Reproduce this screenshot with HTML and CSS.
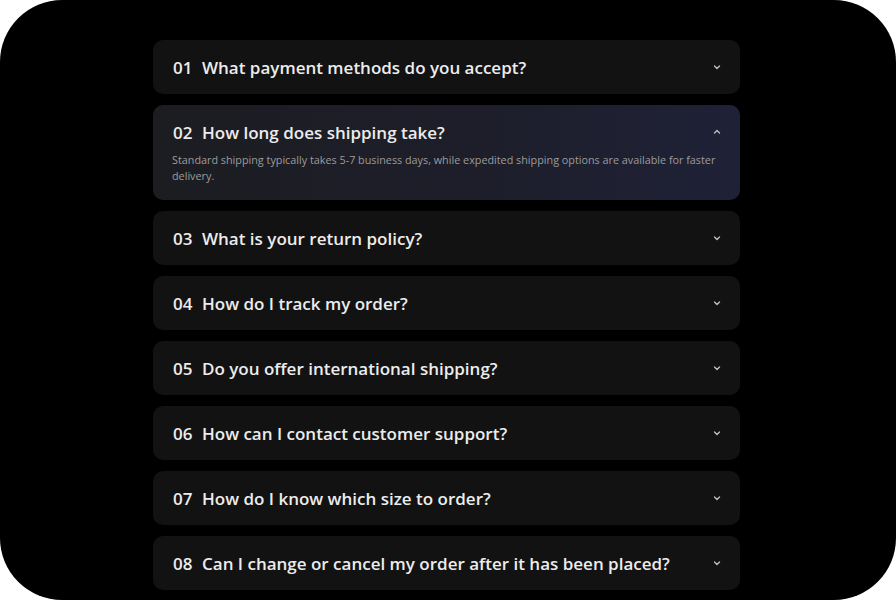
FILE: index.html
```html
<!DOCTYPE html>
<html>
<head>
<meta charset="utf-8">
<link rel="stylesheet" href="styles.css">
</head>
<body>
<div class="frame">
  <div class="faq">
    <div class="item">
      <div class="q"><span class="num">01</span><span class="text">What payment methods do you accept?</span><svg class="chev" viewBox="0 0 10 10"><polyline points="2.5,4 5,6.5 7.5,4"/></svg></div>
    </div>
    <div class="item open">
      <div class="q"><span class="num">02</span><span class="text">How long does shipping take?</span><svg class="chev" viewBox="0 0 10 10"><polyline points="2.5,6 5,3.5 7.5,6"/></svg></div>
      <p class="a">Standard shipping typically takes 5-7 business days, while expedited shipping options are available for faster delivery.</p>
    </div>
    <div class="item">
      <div class="q"><span class="num">03</span><span class="text">What is your return policy?</span><svg class="chev" viewBox="0 0 10 10"><polyline points="2.5,4 5,6.5 7.5,4"/></svg></div>
    </div>
    <div class="item">
      <div class="q"><span class="num">04</span><span class="text">How do I track my order?</span><svg class="chev" viewBox="0 0 10 10"><polyline points="2.5,4 5,6.5 7.5,4"/></svg></div>
    </div>
    <div class="item">
      <div class="q"><span class="num">05</span><span class="text">Do you offer international shipping?</span><svg class="chev" viewBox="0 0 10 10"><polyline points="2.5,4 5,6.5 7.5,4"/></svg></div>
    </div>
    <div class="item">
      <div class="q"><span class="num">06</span><span class="text">How can I contact customer support?</span><svg class="chev" viewBox="0 0 10 10"><polyline points="2.5,4 5,6.5 7.5,4"/></svg></div>
    </div>
    <div class="item">
      <div class="q"><span class="num">07</span><span class="text">How do I know which size to order?</span><svg class="chev" viewBox="0 0 10 10"><polyline points="2.5,4 5,6.5 7.5,4"/></svg></div>
    </div>
    <div class="item">
      <div class="q"><span class="num">08</span><span class="text">Can I change or cancel my order after it has been placed?</span><svg class="chev" viewBox="0 0 10 10"><polyline points="2.5,4 5,6.5 7.5,4"/></svg></div>
    </div>
  </div>
</div>
</body>
</html>
```
FILE: styles.css
```css
html, body {
  margin: 0;
  padding: 0;
  background: #ffffff;
}
body {
  font-family: "Open Sans", "Noto Sans", sans-serif;
  overflow: hidden;
}
.frame {
  width: 896px;
  height: 600px;
  background: #000000;
  border-radius: 62px;
  overflow: hidden;
}
.faq {
  width: 587px;
  margin-left: 153px;
  padding-top: 40px;
  display: flex;
  flex-direction: column;
  gap: 11px;
}
.item {
  background: #121212;
  border-radius: 10px;
}
.item.open {
  background: linear-gradient(90deg, #1c1d21 0%, #1d1e2a 55%, #1f2137 100%);
}
.q {
  display: flex;
  align-items: center;
  height: 54px;
  padding: 0 18px 0 20px;
  color: #ececec;
  font-size: 17px;
  font-weight: 600;
}
.open .q {
  height: 46px;
  padding-top: 8px;
  box-sizing: border-box;
}
.num {
  width: 29px;
  flex: none;
}
.text {
  flex: 1;
}
.chev {
  width: 10px;
  height: 10px;
  flex: none;
  fill: none;
  stroke: #bdbdbd;
  stroke-width: 1.4;
  stroke-linecap: round;
  stroke-linejoin: round;
}
.a {
  margin: 0;
  padding: 1px 22px 16px 19px;
  color: #9c9c9c;
  font-size: 10.8px;
  line-height: 16px;
  max-width: 550px;
}
```
